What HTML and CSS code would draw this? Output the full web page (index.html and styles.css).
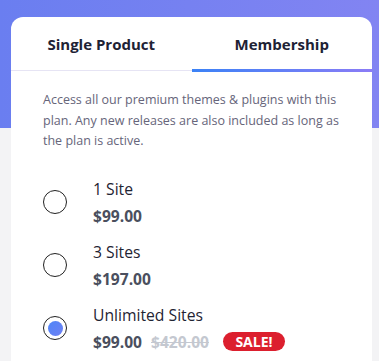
FILE: index.html
```html
<!DOCTYPE html>
<html>
	<head>
		<meta charset="UTF-8">
		<title>Pricing</title>
		<link rel="stylesheet" href="styles.css">
	</head>
	<body>
		<div class="card">
			<div class="tabs">
				<div class="tab">Single Product</div>
				<div class="tab active">Membership</div>
			</div>
			<div class="body">
				<p class="desc">Access all our premium themes &amp; plugins with this plan. Any new releases are also included as long as the plan is active.</p>
				<div class="options">
					<label class="option">
						<span class="radio"></span>
						<span class="info">
							<span class="name">1 Site</span>
							<span class="price">$99.00</span>
						</span>
					</label>
					<label class="option">
						<span class="radio"></span>
						<span class="info">
							<span class="name">3 Sites</span>
							<span class="price">$197.00</span>
						</span>
					</label>
					<label class="option">
						<span class="radio checked"></span>
						<span class="info">
							<span class="name">Unlimited Sites</span>
							<span class="price">$99.00 <s class="old">$420.00</s> <span class="sale">SALE!</span></span>
						</span>
					</label>
				</div>
			</div>
		</div>
	</body>
</html>
```

FILE: styles.css
```css
* {
	margin: 0;
	padding: 0;
	box-sizing: border-box;
}
body {
	font-family: "Open Sans", "Noto Sans", sans-serif;
	background: linear-gradient(to right, #6a7ef0, #8284f2) top left / 100% 128px no-repeat, #f3f3f5;
	height: 361px;
	overflow: hidden;
}
/* white card */
.card {
	margin: 17px 7px 0 11px;
	background: #fff;
	border-radius: 12px 12px 0 0;
	height: 344px;
}
.tabs {
	display: flex;
	border-bottom: 1px solid #e6e4f4;
}
.tab {
	flex: 1;
	position: relative;
	text-align: center;
	font-size: 15px;
	font-weight: 700;
	color: #1e2235;
	height: 53px;
	line-height: 54px;
}
.tab.active::after {
	content: "";
	position: absolute;
	left: 0;
	right: 0;
	bottom: -2px;
	height: 3px;
	background: linear-gradient(to right, #3b82f6, #8b7cf6);
}
.body {
	padding: 19px 32px 0 32px;
}
.desc {
	font-size: 12.5px;
	line-height: 20.5px;
	color: #66657a;
}
.options {
	margin-top: 26px;
	display: flex;
	flex-direction: column;
	gap: 14px;
}
.option {
	display: flex;
	align-items: center;
	gap: 26px;
}
.radio {
	width: 24px;
	height: 24px;
	border: 1px solid #222;
	border-radius: 50%;
	display: flex;
	align-items: center;
	justify-content: center;
}
.radio.checked::before {
	content: "";
	width: 15px;
	height: 15px;
	border-radius: 50%;
	background: linear-gradient(135deg, #4f86f7, #6e80f4);
}
.info {
	display: flex;
	flex-direction: column;
	gap: 5px;
}
.name {
	font-size: 15.7px;
	line-height: 22px;
	color: #1f2433;
}
.price {
	font-size: 15.6px;
	line-height: 22px;
	font-weight: 700;
	color: #4a4f5e;
	display: flex;
	align-items: center;
}
.old {
	color: #c4c8d0;
	margin-left: 6px;
	padding: 0 2px 0 3px;
}
.sale {
	margin-left: 12px;
	background: #dc1f2e;
	color: #fff;
	font-size: 14px;
	line-height: 19px;
	width: 62px;
	text-align: center;
	border-radius: 10px;
}
```
